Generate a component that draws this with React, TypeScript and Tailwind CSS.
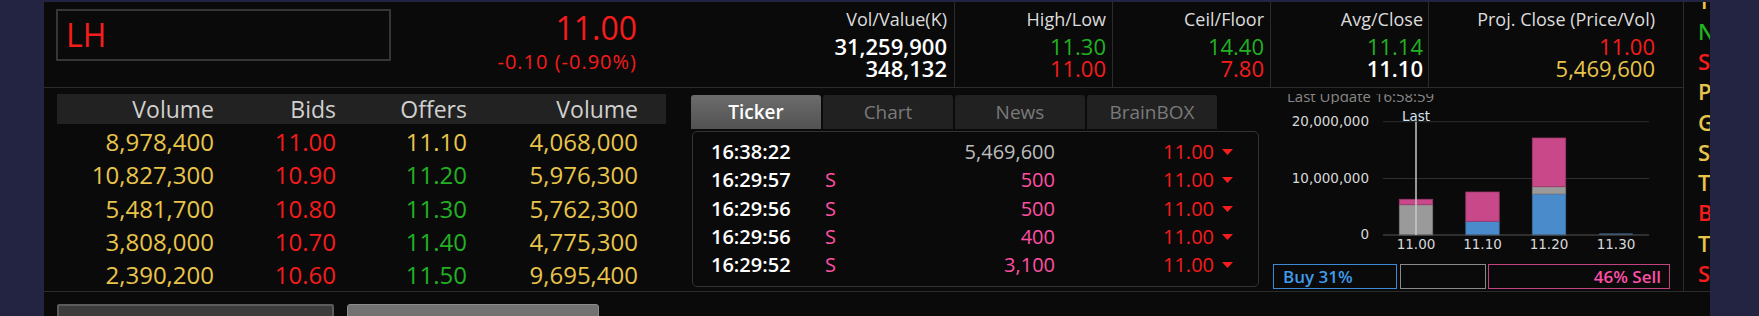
const YEL = "text-[#e8c44a]";
const RED = "text-[#f51c1c]";
const GRN = "text-[#22b122]";

const stats = [
  { label: "Vol/Value(K)", a: ["31,259,900", "text-white font-semibold"], b: ["348,132", "text-white font-semibold"], w: "w-[318px] border-r pr-[7px]" },
  { label: "High/Low", a: ["11.30", GRN], b: ["11.00", RED], w: "w-[158px] border-r pr-[6px]" },
  { label: "Ceil/Floor", a: ["14.40", GRN], b: ["7.80", RED], w: "w-[158px] border-r pr-[6px]" },
  { label: "Avg/Close", a: ["11.14", GRN], b: ["11.10", "text-white font-semibold"], w: "w-[158px] border-r pr-[5px]" },
  { label: "Proj. Close (Price/Vol)", a: ["11.00", RED], b: ["5,469,600", YEL], w: "flex-1 pr-[28px]" },
];

const book = [
  ["8,978,400", "11.00", "11.10", "4,068,000", YEL],
  ["10,827,300", "10.90", "11.20", "5,976,300", GRN],
  ["5,481,700", "10.80", "11.30", "5,762,300", GRN],
  ["3,808,000", "10.70", "11.40", "4,775,300", GRN],
  ["2,390,200", "10.60", "11.50", "9,695,400", GRN],
];

const ticks = [
  ["16:38:22", "", "5,469,600", "text-[#bdbdbd]"],
  ["16:29:57", "S", "500", "text-[#ff4fa3]"],
  ["16:29:56", "S", "500", "text-[#ff4fa3]"],
  ["16:29:56", "S", "400", "text-[#ff4fa3]"],
  ["16:29:52", "S", "3,100", "text-[#ff4fa3]"],
];

const letters = [
  ["T", YEL], ["N", GRN], ["S", RED], ["P", YEL], ["G", YEL],
  ["S", YEL], ["T", YEL], ["B", RED], ["T", YEL], ["S", RED],
];

const tabs = ["Ticker", "Chart", "News", "BrainBOX"];

function VolumeChart() {
  const lbl = { fontSize: 13.5, fill: "#d8d8d8" };
  return (
    <svg width="397" height="150" fontFamily="DejaVu Sans, sans-serif">
      <line x1="110" x2="376" y1="17.7" y2="17.7" stroke="#2f2f2f" />
      <line x1="110" x2="376" y1="74.5" y2="74.5" stroke="#2f2f2f" />
      <text x="96" y="22" textAnchor="end" {...lbl}>20,000,000</text>
      <text x="96" y="79" textAnchor="end" {...lbl}>10,000,000</text>
      <text x="96" y="135" textAnchor="end" {...lbl}>0</text>

      <rect x="126.3" y="100.7" width="33.4" height="30.3" fill="#9a9a9a" stroke="#7a7a7a" strokeWidth="0.8" />
      <rect x="126.3" y="95.3" width="33.4" height="5.4" fill="#c9488a" stroke="#9c3a6c" strokeWidth="0.8" />

      <rect x="192.8" y="117.3" width="33.4" height="13.7" fill="#4a8bcc" stroke="#3a6fa5" strokeWidth="0.8" />
      <rect x="192.8" y="88" width="33.4" height="29.3" fill="#c9488a" stroke="#9c3a6c" strokeWidth="0.8" />

      <rect x="259.3" y="90" width="33.4" height="41" fill="#4a8bcc" stroke="#3a6fa5" strokeWidth="0.8" />
      <rect x="259.3" y="82.7" width="33.4" height="7.3" fill="#9a9a9a" stroke="#7a7a7a" strokeWidth="0.8" />
      <rect x="259.3" y="34" width="33.4" height="48.7" fill="#c9488a" stroke="#9c3a6c" strokeWidth="0.8" />

      <rect x="326.3" y="129.3" width="33.4" height="1.7" fill="#35587a" />

      <line x1="110" x2="376" y1="131" y2="131" stroke="#555" />
      <line x1="143" x2="143" y1="17.7" y2="131" stroke="#c8c8c8" strokeWidth="1.5" />
      <text x="143" y="17" textAnchor="middle" fontSize="13.5" fill="#d6e4f0">Last</text>

      {[["11.00", 143], ["11.10", 209.5], ["11.20", 276], ["11.30", 343]].map(([t, x]) => (
        <text key={t} x={x} y="144.7" textAnchor="middle" {...lbl}>{t}</text>
      ))}
    </svg>
  );
}

export default function App() {
  return (
    <div className="w-[1759px] h-[316px] overflow-hidden bg-[#232342] pt-[2px] pl-[44px] pr-[49px] font-['Open_Sans','Noto_Sans',sans-serif]">
      <div className="h-full bg-[#0a0a0a] flex flex-col">
        <div className="flex h-[292px] border-b border-[#2c2c2c]">
          <div className="w-[1640px] border-r border-[#2c2c2c] flex flex-col">
            {/* header */}
            <div className="h-[86px] border-b border-[#2c2c2c] flex">
              <div className="ml-[12px] mt-[7px] w-[335px] h-[52px] border-2 border-[#363636] flex items-center pl-[8px]">
                <span className={`text-[32px] leading-[36px] ${RED}`}>LH</span>
              </div>
              <div className={`w-[246px] flex flex-col items-end pt-[10px] ${RED}`}>
                <span className="text-[32px] leading-[32px]">11.00</span>
                <span className="text-[20px] leading-[24px] mt-[6px] tracking-[1px]">-0.10 (-0.90%)</span>
              </div>
              {stats.map((s) => (
                <div key={s.label} className={`${s.w} border-[#2c2c2c] text-right pt-[5px]`}>
                  <div className="text-[18px] leading-[24px] text-[#dcdcdc]">{s.label}</div>
                  <div className="mt-[5px] text-[22px] leading-[21.5px]">
                    <div className={s.a[1]}>{s.a[0]}</div>
                    <div className={s.b[1]}>{s.b[0]}</div>
                  </div>
                </div>
              ))}
            </div>

            {/* body */}
            <div className="flex-1 flex">
              {/* order book */}
              <div className="ml-[13px] mt-[6px] w-[609px]">
                <div className="h-[30px] bg-[#222222] grid grid-cols-[157px_122px_131px_171px] text-[23px] leading-[30px] text-[#d0d0d0] text-right">
                  <span>Volume</span>
                  <span>Bids</span>
                  <span>Offers</span>
                  <span>Volume</span>
                </div>
                <div className="pt-[1px]">
                  {book.map((r, i) => (
                    <div key={i} className="grid grid-cols-[157px_122px_131px_171px] text-[24px] leading-[33.3px] text-right">
                      <span className={YEL}>{r[0]}</span>
                      <span className={RED}>{r[1]}</span>
                      <span className={r[4]}>{r[2]}</span>
                      <span className={YEL}>{r[3]}</span>
                    </div>
                  ))}
                </div>
              </div>

              {/* ticker */}
              <div className="ml-[25px] mt-[7px] w-[568px]">
                <div className="flex gap-[2px] h-[34px]">
                  {tabs.map((t, i) => (
                    <div
                      key={t}
                      className={
                        i === 0
                          ? "w-[130px] rounded-t-[3px] bg-gradient-to-b from-[#6c6c6c] to-[#525252] text-white font-semibold text-[19px] flex items-center justify-center"
                          : "w-[130px] rounded-t-[3px] bg-[#212121] text-[#7a7a7a] text-[19px] flex items-center justify-center"
                      }
                    >
                      {t}
                    </div>
                  ))}
                </div>
                <div className="mt-[2px] ml-[1px] w-[567px] h-[156px] border border-[#333333] rounded-[5px] pt-[6px] pl-[18px]">
                  {ticks.map((r, i) => (
                    <div key={i} className="grid grid-cols-[114px_60px_170px_159px_auto] items-center text-[20px] leading-[28.3px]">
                      <span className="text-white font-semibold">{r[0]}</span>
                      <span className="text-[#ff4fa3]">{r[1]}</span>
                      <span className={`text-right ${r[3]}`}>{r[2]}</span>
                      <span className={`text-right ${RED}`}>11.00</span>
                      <svg width="11" height="6" className="ml-[8px]">
                        <polygon points="0,0 11,0 5.5,6" fill="#f51c1c" />
                      </svg>
                    </div>
                  ))}
                </div>
              </div>

              {/* volume by price */}
              <div className="ml-[14px] w-[397px] flex flex-col">
                <div className="mt-[6px] h-[10px] overflow-hidden pl-[14px]">
                  <div className="mt-[-8px] text-[15px] leading-[20px] text-[#888888]">Last Update 16:58:59</div>
                </div>
                <VolumeChart />
                <div className="mt-[10px] flex h-[25px] text-[17px] font-semibold">
                  <div className="w-[124px] border-[1.5px] border-[#3a8ad6] text-[#3f9cec] pl-[9px] flex items-center leading-[22px]">Buy 31%</div>
                  <div className="ml-[3px] w-[86px] border-[1.5px] border-[#8a8a8a]" />
                  <div className="ml-[2px] w-[182px] border-[1.5px] border-[#c2437f] text-[#ff4fa8] pr-[8px] flex items-center justify-end leading-[22px]">46% Sell</div>
                </div>
              </div>
            </div>
          </div>

          {/* side letters */}
          <div className="flex-1 overflow-hidden">
            <div className="mt-[-16.7px] pl-[14px]">
              {letters.map(([l, c], i) => (
                <div key={i} className={`text-[22px] leading-[30.3px] font-semibold ${c}`}>{l}</div>
              ))}
            </div>
          </div>
        </div>

        {/* footer buttons */}
        <div className="flex gap-[13px] pl-[13px] pt-[12px]">
          <div className="w-[277px] h-[30px] bg-[#3c3c3c] border-2 border-[#5c5c5c] rounded-t-[2px]" />
          <div className="w-[252px] h-[30px] bg-[#727272] border border-[#8c8c8c] rounded-t-[3px]" />
        </div>
      </div>
    </div>
  );
}
